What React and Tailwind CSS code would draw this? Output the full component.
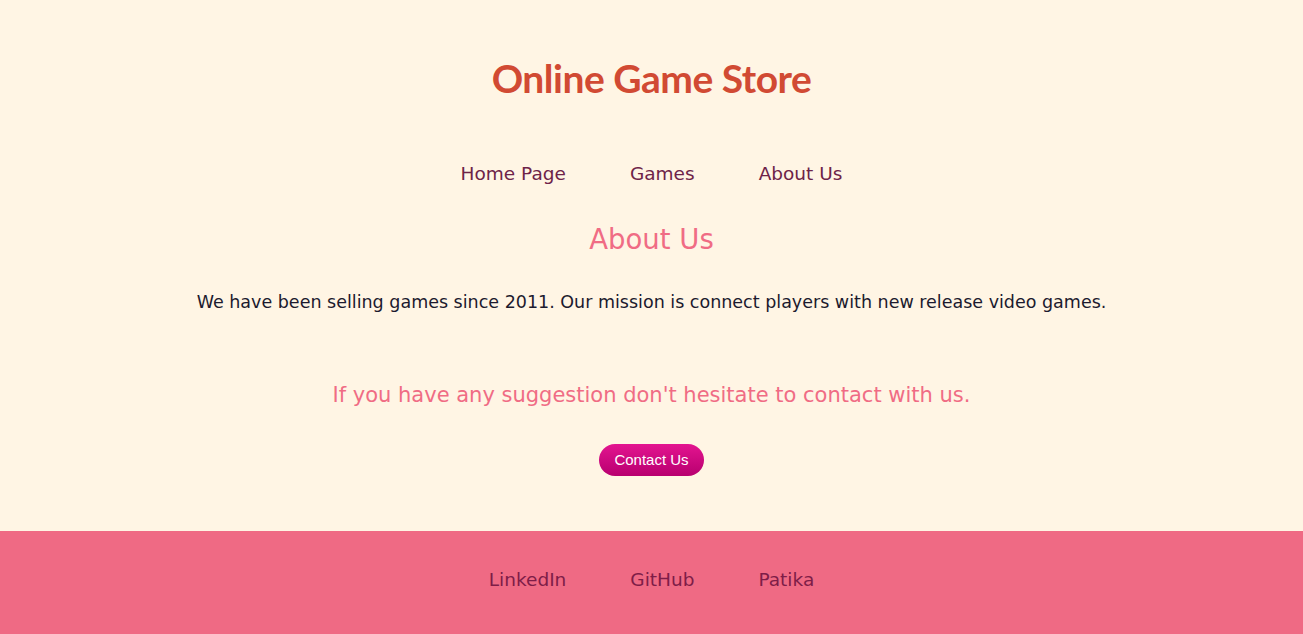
import React from "react";

const body = { fontFamily: '"DejaVu Sans", "Noto Sans", sans-serif' };

const NavLinks = ({ items, className }) => (
  <ul className={"flex justify-center gap-[64px] " + className}>
    {items.map((item) => (
      <li key={item}>
        <a href="#" className="no-underline">{item}</a>
      </li>
    ))}
  </ul>
);

const App = () => {
  return (
    <div className="min-h-screen bg-[#fff5e4] flex flex-col" style={body}>
      <header className="pt-[54px] text-center">
        <h1
          className="text-[39px] font-bold text-[#d14a33] leading-[48px] tracking-[-0.5px]"
          style={{ fontFamily: 'Lato, "Open Sans", sans-serif' }}
        >
          Online Game Store
        </h1>
        <nav className="mt-[59px]">
          <NavLinks
            items={["Home Page", "Games", "About Us"]}
            className="text-[18.5px] text-[#6e2348] leading-[26px]"
          />
        </nav>
      </header>

      <main className="flex-1 flex flex-col items-center text-center">
        <h2 className="mt-[35px] text-[27.5px] text-[#f06c84] leading-[34px]">About Us</h2>
        <p className="mt-[34px] text-[17.5px] text-[#1c1a2e] leading-[24px]">
          We have been selling games since 2011. Our mission is connect players with new release video games.
        </p>
        <h3 className="mt-[67px] text-[21px] text-[#f06c84] leading-[28px]">
          If you have any suggestion don't hesitate to contact with us.
        </h3>
        <button
          className="mt-[35px] w-[105px] h-[32px] rounded-full bg-gradient-to-b from-[#e31490] to-[#b8006f] text-white text-[15px]"
          style={{ fontFamily: '"Liberation Sans", Arial, sans-serif' }}
        >
          Contact Us
        </button>
        <div className="h-[55px]" />
      </main>

      <footer className="bg-[#ef6a84] h-[103px] pt-[36px]">
        <NavLinks
          items={["LinkedIn", "GitHub", "Patika"]}
          className="text-[18.5px] text-[#7e1d48] leading-[26px]"
        />
      </footer>
    </div>
  );
};

export default App;
